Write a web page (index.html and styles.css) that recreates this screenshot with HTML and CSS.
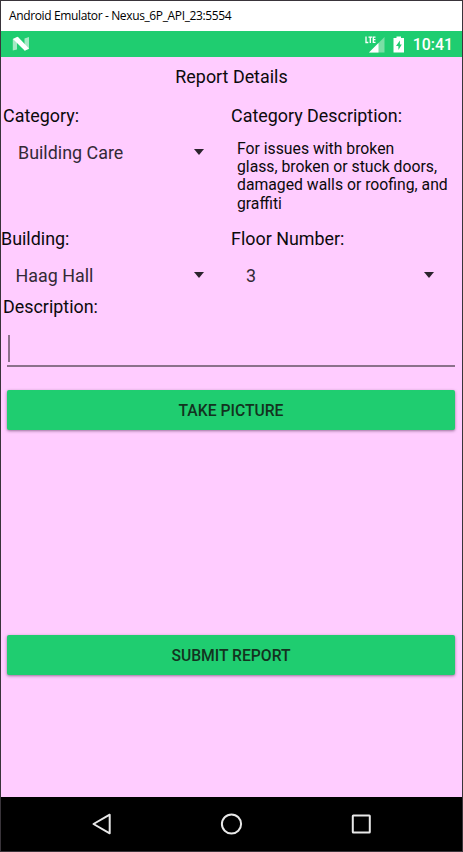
FILE: index.html
```
<!DOCTYPE html>
<html lang="en">
<head>
<meta charset="utf-8">
<title>Report Details</title>
<link rel="stylesheet" href="styles.css">
</head>
<body>
<div class="window">
  <header class="titlebar"><span>Android Emulator - Nexus_6P_API_23:5554</span></header>
  <div class="statusbar">
    <svg class="n-logo" width="18" height="16" viewBox="0 0 18 16">
      <path d="M.8 3 5 1v12.500L.8 14.500zM12.500 2.500l4.500-1.500v12l-4.500 1.500z" fill="#a5e9c4"/>
      <path d="M1 3 5.800.8 17 12.500 12.800 14.800z" fill="#fff"/>
    </svg>
    <div class="status-icons">
      <svg width="20" height="19" viewBox="0 0 20 19">
        <path d="M19.500 2V17.500H4z" fill="#79dfa5"/>
        <path d="M13.500 8v9.500H4z" fill="#fff"/>
        <path d="M1 1.500v6h2.300M3.500 2.100h3.600M5.300 2v6M10.500 2.100H8.300v5.300h2.200M8.300 4.700h2.200" fill="none" stroke="#fff" stroke-width="1.300"/>
      </svg>
      <svg class="battery" width="12" height="17" viewBox="0 0 12 17">
        <path d="M3.500.5h4.500V2H11V16.500H.5V2h3z" fill="#fff"/>
        <path d="M6.900 4.500 3 10h2.400v4L8.800 8.500H6.900z" fill="#1fcd70"/>
      </svg>
      <span class="clock">10:41</span>
    </div>
  </div>
  <main class="form">
    <h1>Report Details</h1>
    <section class="row category">
      <div class="col">
        <div class="label inset">Category:</div>
        <div class="spinner"><span>Building Care</span><i class="caret"></i></div>
      </div>
      <div class="col">
        <div class="label">Category Description:</div>
        <p class="hint">For issues with broken<br>glass, broken or stuck doors,<br>damaged walls or roofing, and<br>graffiti</p>
      </div>
    </section>
    <section class="row location">
      <div class="col">
        <div class="label">Building:</div>
        <div class="spinner building"><span>Haag Hall</span><i class="caret"></i></div>
      </div>
      <div class="col">
        <div class="label">Floor Number:</div>
        <div class="spinner floor"><span>3</span><i class="caret"></i></div>
      </div>
    </section>
    <div class="label inset">Description:</div>
    <div class="input"><i class="cursor"></i></div>
    <button class="take">TAKE PICTURE</button>
    <button class="submit">SUBMIT REPORT</button>
  </main>
  <nav class="navbar">
    <svg width="24" height="24" viewBox="0 0 24 24"><path d="M20.700 2.700v18.600L4.500 12z"/></svg>
    <svg width="24" height="24" viewBox="0 0 24 24"><circle cx="11.500" cy="12" r="9.600"/></svg>
    <svg width="24" height="24" viewBox="0 0 24 24"><rect x="2.800" y="3.500" width="17" height="17" rx=".5"/></svg>
  </nav>
</div>
</body>
</html>
```
FILE: styles.css
```
* { box-sizing: border-box; }
body { margin: 0; font-family: Roboto, sans-serif; }
.window {
  width: 463px; height: 852px;
  display: flex; flex-direction: column;
  border: 1px solid #39343a;
  background: #ffccff;
}
.titlebar {
  height: 30px; padding-left: 8px;
  background: #fff; color: #000;
  font: 12px/30px "Open Sans", sans-serif;
  letter-spacing: -0.37px;
  white-space: nowrap;
}
.statusbar {
  height: 26px; padding: 0 9px 0 11px;
  display: flex; align-items: center; justify-content: space-between;
  background: #1fcd70; color: #fff;
}
.status-icons { display: flex; align-items: center; }
.battery { margin-left: 8px; }
.clock { margin-left: 8px; font-size: 15.900px; font-weight: 500; line-height: 27px; }
.form { height: 740px; color: #0c0a0c; }
h1 {
  margin: 0; padding-top: 8.500px;
  font-size: 17.900px; font-weight: 400; line-height: 22px; text-align: center;
}
.row { display: grid; grid-template-columns: 230px 1fr; }
.category { height: 123px; padding-top: 17px; }
.location { height: 85.500px; padding-top: 17px; }
.label { font-size: 17.900px; line-height: 22px; white-space: nowrap; }
.inset { padding-left: 2px; }
.spinner {
  display: flex; align-items: center; justify-content: space-between;
  margin-top: 15px; padding: 0 27.500px 0 17px;
  font-size: 17.900px; line-height: 22px; color: #332936;
}
.building { padding-left: 14.500px; }
.floor { padding-left: 15px; }
.floor.spinner { padding-right: 28px; }
.caret {
  margin-bottom: 1px;
  border: 5.500px solid transparent;
  border-top: 6px solid #2b232d; border-bottom-width: 0;
}
.hint { margin: 13.500px 0 0 6px; font-size: 15.750px; line-height: 18.200px; white-space: nowrap; }
.input {
  height: 49px; margin: 0 7px 0 6px; padding: 17px 0 0 1px;
  border-bottom: 2px solid #8b718b;
}
.cursor { display: block; width: 2px; height: 27px; background: #8b718b; }
button {
  display: block; width: 448px; height: 40px; margin-left: 6px; padding: 0;
  border: 0; border-radius: 2px;
  background: #1fcd70; color: #13331f;
  font: 500 15.700px/41px Roboto, sans-serif;
  box-shadow: 0 1px 3px rgba(50, 20, 50, .5);
}
.take { margin-top: 23px; }
.submit { margin-top: 204.500px; }
.navbar {
  height: 54px; padding: 0 88px;
  display: flex; align-items: center; justify-content: space-between;
  background: #000;
}
.navbar svg { fill: none; stroke: #e8e8e8; stroke-width: 2; stroke-linejoin: round; }
```
